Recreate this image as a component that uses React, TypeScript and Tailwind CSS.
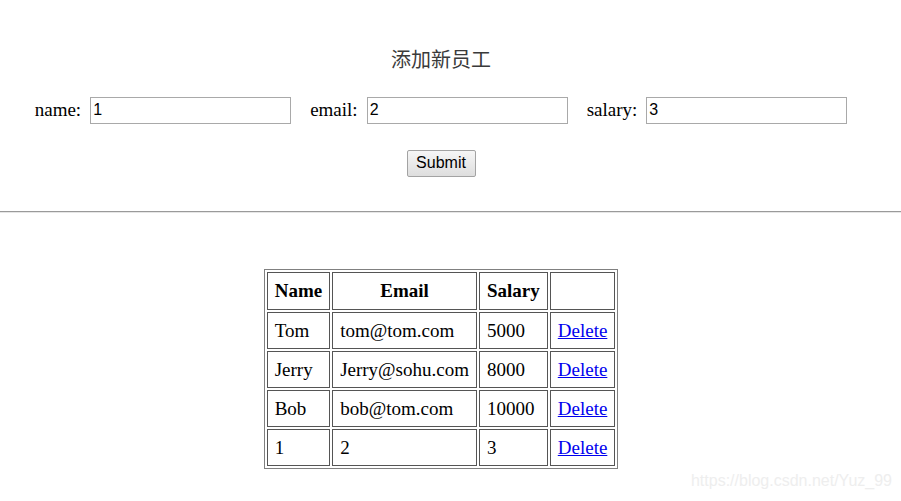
import React from "react";

const employees = [
  { name: "Tom", email: "tom@tom.com", salary: "5000" },
  { name: "Jerry", email: "Jerry@sohu.com", salary: "8000" },
  { name: "Bob", email: "bob@tom.com", salary: "10000" },
  { name: "1", email: "2", salary: "3" },
];

const serif = "font-['Liberation_Serif','Noto_Sans_CJK_SC',serif]";

function Field({ label, value }: { label: string; value: string }) {
  return (
    <label className="flex items-center gap-[9px] text-[19px] text-black">
      <span>{label}</span>
      <input
        readOnly
        value={value}
        className="w-[201px] h-[27px] border border-[#a9a9a9] px-[2px] bg-white text-[16px] font-['Liberation_Sans',sans-serif] outline-none"
      />
    </label>
  );
}

export default function App() {
  return (
    <div className={`relative w-[901px] h-[501px] bg-white overflow-hidden ${serif}`}>
      <div className="w-[882px] flex flex-col items-center pt-[47px]">
        <h3 className="text-[20px] leading-[26px] text-[#3a3a3a]">添加新员工</h3>

        <div className="flex items-center gap-[19px] mt-[23px]">
          <Field label="name:" value="1" />
          <Field label="email:" value="2" />
          <Field label="salary:" value="3" />
        </div>

        <button className="mt-[25px] w-[69px] h-[27px] rounded-[2px] border border-[#a3a3a3] bg-gradient-to-b from-[#f6f6f6] to-[#dedede] text-[16px] text-black font-['Liberation_Sans',sans-serif]">
          Submit
        </button>
      </div>

      <div className="mt-[34px] border-t border-t-[#9a9a9a] border-b border-b-[#e6e6e6]" />

      <div className="w-[882px] flex justify-center mt-[56px]">
        <table className="border border-[#808080] border-separate border-spacing-[2px] text-[19px] leading-[21px]">
          <thead>
            <tr>
              {["Name", "Email", "Salary", ""].map((h, i) => (
                <th key={i} className="h-[38px] border border-[#555] px-[7px] py-[7px] font-bold text-center">
                  {h}
                </th>
              ))}
            </tr>
          </thead>
          <tbody>
            {employees.map((e, i) => (
              <tr key={i}>
                <td className="border border-[#555] px-[7px] py-[7px]">{e.name}</td>
                <td className="border border-[#555] px-[7px] py-[7px]">{e.email}</td>
                <td className="border border-[#555] px-[7px] py-[7px]">{e.salary}</td>
                <td className="border border-[#555] px-[7px] py-[7px]">
                  <a href="#" className="text-[#0000ee] underline">Delete</a>
                </td>
              </tr>
            ))}
          </tbody>
        </table>
      </div>

      <div className="absolute right-[9px] bottom-[8px] text-[16px] text-[#eeeeee] font-['Liberation_Sans',sans-serif]">
        https://blog.csdn.net/Yuz_99
      </div>
    </div>
  );
}
